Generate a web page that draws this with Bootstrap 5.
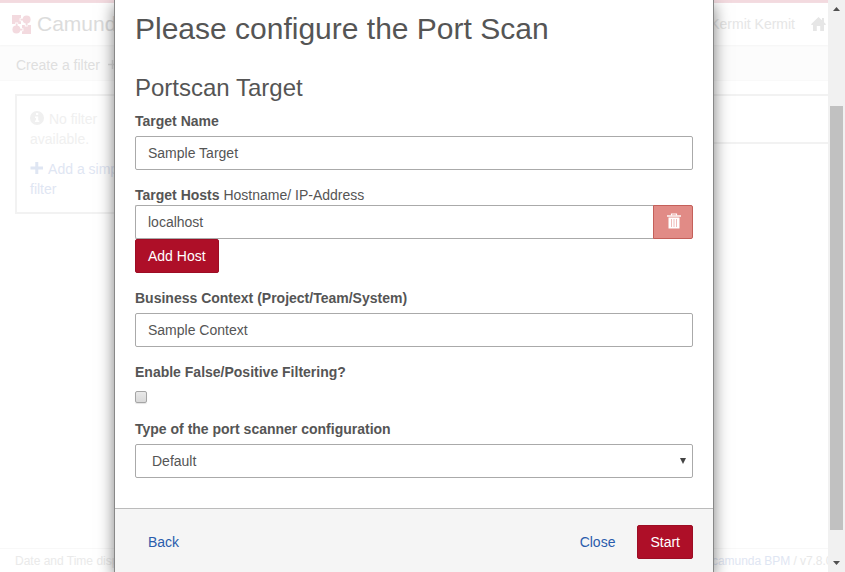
<!DOCTYPE html>
<html lang="en">
<head>
<meta charset="utf-8">
<title>Camunda Tasklist</title>
<link rel="stylesheet" href="https://cdn.jsdelivr.net/npm/bootstrap@5.3.0/dist/css/bootstrap.min.css">
<style>
body{font:14px/20px "Liberation Sans",Arial,sans-serif;color:#555;height:572px;background:#fff}
svg{display:block}
.page{width:828px;height:572px}
.topline{height:3px;background:#f3dadf}
.app-head{height:42px;padding:0 2px 0 12px;background:#fff;color:#e6e6e6;box-shadow:0 1px 2px #f5f5f5;z-index:1}
.brand-name{font-size:21px;color:#dcdcdc;margin-left:6px}
.logo{color:#f3dadf}
.filter-bar{height:36px;padding:0 16px;background:#fcfcfc;color:#dfdfdf;border-bottom:1px solid #f9f9f9}
.filters{width:150px;height:120px;margin:13px 0 0 15px;padding:13px;border:2px solid #f2f2f2;color:#f0f0f0}
.filters svg{margin-right:1px}
.filters .none{margin-bottom:10px}
.filters .add{color:#dfe6f3}
.tasks{height:50px;margin-top:13px;border:solid #f2f2f2;border-width:2px 0}
.app-foot{height:24px;border-top:1px solid #f8f8f8;font-size:12px;padding:2px 0 0 15px;color:#eaeaea}
.app-foot .ver{width:116px;color:#e8e8e8;letter-spacing:-.05px}
.app-foot .ver span{color:#dfe6f3}
.dialog-box{left:114px;top:0;width:600px;height:572px;border:solid #888;border-width:0 1px;box-shadow:0 5px 15px rgba(0,0,0,.5);background:#fff;z-index:5}
.dialog-main{padding:12px 20px 0;height:508px}
.dialog-main h1{font-size:30px;line-height:33px;font-weight:400;margin:0 0 30px}
.dialog-main h2{font-size:24px;line-height:26px;font-weight:400;margin:0 0 10px}
.dialog-main label{display:block;line-height:20px;font-weight:700}
.field,.field:focus{height:34px;border:1px solid #aaa;border-radius:2px;padding:6px 12px;font-size:14px;line-height:20px;color:#555;background:#fff;box-shadow:none}
.red,.red:hover{height:34px;background:#ae0f28;border:1px solid #9d0d24;border-radius:2px;color:#fff;font-size:14px;line-height:20px;padding:6px 12px}
.trash,.trash:hover{width:40px;height:34px;padding:0 0 3px 1px;background:#e18b86;border:1px solid #c4605a;border-radius:0 2px 2px 0;color:#fff}
.check{width:12px;height:12px;margin:9px 0 0;border:1px solid #a5a5a5;border-radius:2px;background:linear-gradient(#e9e9e9,#d9d9d9);box-shadow:0 1px 1px #e4e4e4;appearance:none;display:block}
.dialog-foot{height:64px;border-top:1px solid #bbb;background:#f5f5f5;padding:16px 20px 0}
.plain,.plain:hover{height:34px;color:#2a5cac;font-size:14px;line-height:20px;padding:6px 13px;text-decoration:none}
.plain:first-child{padding-left:12px}
.scroller{width:17px;height:572px;background:#f1f1f1;color:#505050;padding:7px 2px 7px}
.thumb{width:13px;height:424px;background:#c1c1c1;margin-top:95px}
#tn,#bc,#ty{margin-top:5px}
#tn,#bc,.add-host{margin-bottom:15px}
.config{margin-top:16px}
.select-box{padding:0 6px 0 16px}
</style>
</head>
<body class="d-flex overflow-hidden">
<div class="page position-relative overflow-hidden d-flex flex-column">
  <div class="topline flex-shrink-0"></div>
  <header class="app-head d-flex align-items-center position-relative flex-shrink-0">
    <svg class="logo" width="19" height="19" viewBox="0 0 19 19" fill="currentColor"><path d="M0 0h9v3.2H7.6v3H9V9H6.2V7.6h-3V9H0z"/><circle cx="14.6" cy="4.4" r="4"/><path d="M8.5 3.8h3v1.8h-3zM13.7 8h1.8v2.5h-1.8z"/><circle cx="4.4" cy="14.6" r="4"/><path d="M3.8 8.5h1.8v3H3.8zM8 13.7h2.5v1.8H8z"/><path d="M10 10h2.8v1.4h3V10H19v9h-9v-2.8h1.4v-3H10z"/></svg>
    <span class="brand-name">Camund</span>
    <span class="ms-auto">Kermit Kermit</span>
    <svg class="ms-3" width="15" height="14" viewBox="0 0 15 14" fill="currentColor"><path d="M7.5 0 11 3.3V1h2v4.2L15 7.3 14.3 8H13v6H9.2V9H5.8v5H2V8H.7L0 7.3z"/></svg>
  </header>
  <div class="filter-bar d-flex align-items-center flex-shrink-0 pt-1">
    <span>Create a filter</span>
    <svg class="ms-2" width="9" height="9" viewBox="0 0 9 9" stroke="currentColor" stroke-width="1.4"><path d="M4.5 0v9M0 4.5h9"/></svg>
  </div>
  <main class="d-flex flex-grow-1">
    <aside class="filters">
      <p class="none"><svg class="d-inline-block align-text-bottom" width="14" height="16" viewBox="0 0 14 16"><circle cx="7" cy="7" r="7" fill="currentColor"/><path d="M6 2h2.2v2H6zM5 5.5h3.2v4H9.3V11H5V9.5h1V7H5z" fill="#fff"/></svg> No filter<br>available.</p>
      <p class="add text-nowrap mb-0"><svg class="d-inline-block align-text-bottom" width="14" height="16" viewBox="0 0 14 16" fill="currentColor"><path d="M5.3 1h3v4.6H13v3H8.3V13h-3V8.6H.5v-3h4.8z"/></svg> Add a simple<br>filter</p>
    </aside>
    <section class="tasks flex-grow-1"></section>
  </main>
  <footer class="app-foot d-flex justify-content-between text-nowrap flex-shrink-0">
    <span>Date and Time disp</span>
    <span class="ver"><span>camunda BPM</span> / v7.8.0</span>
  </footer>

  <div class="dialog-box position-absolute" role="dialog">
    <div class="dialog-main">
      <h1>Please configure the Port Scan</h1>
      <h2>Portscan Target</h2>
      <label for="tn">Target Name</label>
      <input id="tn" class="field form-control" value="Sample Target">
      <label for="th">Target Hosts <span class="fw-normal">Hostname/ IP-Address</span></label>
      <div class="input-group">
        <input id="th" class="field form-control border-end-0" value="localhost">
        <button class="btn trash d-flex align-items-center justify-content-center" aria-label="Remove host"><svg width="14" height="16" viewBox="0 0 14 16" fill="none" stroke="#fff"><path d="M4.5 2.5V1h5v1.5" stroke-width="1.2"/><path d="M0 3h14" stroke-width="1.4"/><path d="M1.5 4.5h11V15.5h-11z" fill="#fff" stroke="none"/><path d="M4.5 6v8M7 6v8M9.5 6v8" stroke="#efbcb9"/></svg></button>
      </div>
      <button class="btn red add-host d-block">Add Host</button>
      <label for="bc">Business Context (Project/Team/System)</label>
      <input id="bc" class="field form-control" value="Sample Context">
      <label for="fp">Enable False/Positive Filtering?</label>
      <input id="fp" class="check" type="checkbox">
      <label class="config">Type of the port scanner configuration</label>
      <div id="ty" class="field select-box d-flex align-items-center justify-content-between"><span>Default</span><svg width="6" height="6" viewBox="0 0 6 6" fill="#444"><path d="M0 0h6L3 6z"/></svg></div>
    </div>
    <div class="dialog-foot d-flex">
      <a class="btn plain" href="#">Back</a>
      <a class="btn plain ms-auto me-2" href="#">Close</a>
      <button class="btn red">Start</button>
    </div>
  </div>
</div>
<div class="scroller flex-shrink-0 d-flex flex-column">
  <svg class="align-self-center" width="7" height="4" viewBox="0 0 7 4" fill="currentColor"><path d="M0 4 3.5 0 7 4z"/></svg>
  <div class="thumb"></div>
  <svg class="align-self-center mt-auto" width="7" height="4" viewBox="0 0 7 4" fill="currentColor"><path d="M0 0h7L3.5 4z"/></svg>
</div>
<script src="https://cdn.jsdelivr.net/npm/bootstrap@5.3.0/dist/js/bootstrap.bundle.min.js"></script>
</body>
</html>
